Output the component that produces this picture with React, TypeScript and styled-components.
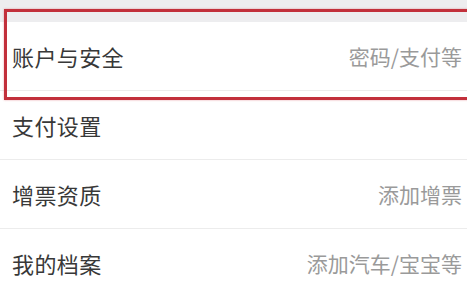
import React from "react";
import styled, { createGlobalStyle } from "styled-components";

const GlobalStyle = createGlobalStyle`
  html, body {
    margin: 0;
    padding: 0;
    background: #ffffff;
    overflow: hidden;
  }
  body {
    font-family: "Noto Sans CJK SC", "Noto Sans", sans-serif;
  }
`;

const Page = styled.div`
  position: relative;
  width: 467px;
  height: 289px;
  overflow: hidden;
  background: #ffffff;
`;

const Gap = styled.div`
  height: 22px;
  background: #ededef;
`;

const List = styled.div`
  display: flex;
  flex-direction: column;
`;

const Row = styled.div`
  height: 68px;
  display: flex;
  align-items: center;
  justify-content: space-between;
  padding: 0 5px 0 12px;
  border-bottom: 1px solid #ececec;
  background: #ffffff;

  &:last-child {
    border-bottom: none;
  }
`;

const Label = styled.span`
  font-size: 22px;
  color: #383838;
  letter-spacing: 0.4px;
`;

const Value = styled.span`
  font-size: 21px;
  color: #9a9a9a;
`;

const Highlight = styled.div`
  position: absolute;
  left: 4px;
  top: 9px;
  width: 520px;
  height: 85px;
  border: 3px solid #c2303b;
  box-shadow: 0 0 2px rgba(210, 60, 70, 0.45);
  pointer-events: none;
`;

const rows = [
  { label: "账户与安全", value: "密码/支付等" },
  { label: "支付设置", value: "" },
  { label: "增票资质", value: "添加增票" },
  { label: "我的档案", value: "添加汽车/宝宝等" },
];

export default function App() {
  return (
    <>
      <GlobalStyle />
      <Page>
        <Gap />
        <List>
          {rows.map((r) => (
            <Row key={r.label}>
              <Label>{r.label}</Label>
              {r.value && <Value>{r.value}</Value>}
            </Row>
          ))}
        </List>
        <Highlight />
      </Page>
    </>
  );
}
